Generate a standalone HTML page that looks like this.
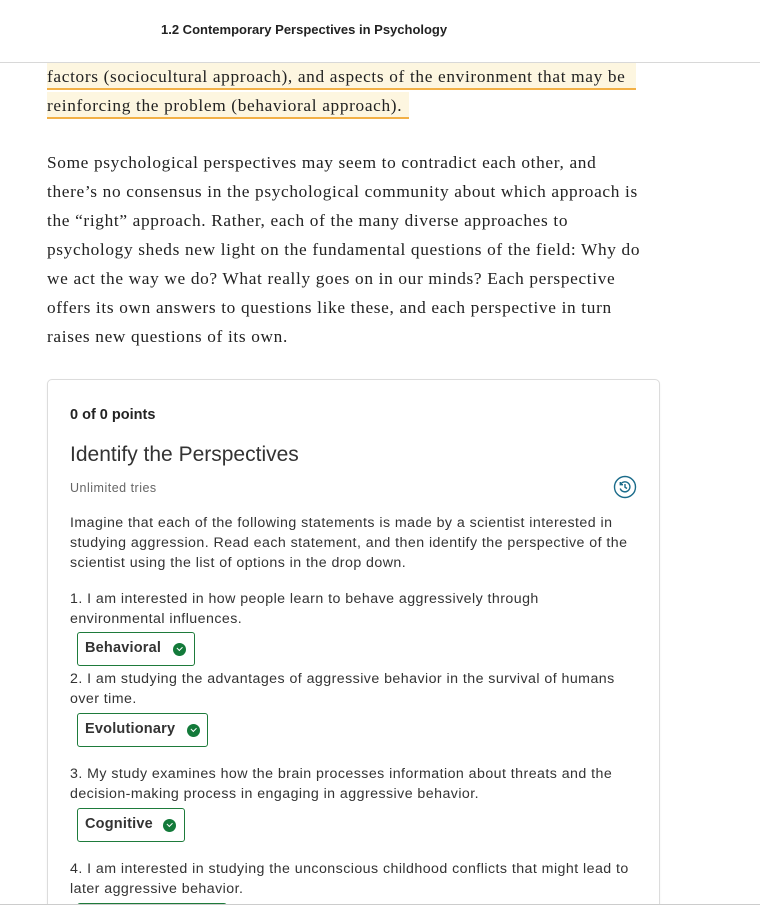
<!DOCTYPE html>
<html><head><meta charset="utf-8"><style>
*{margin:0;padding:0;box-sizing:border-box}
html,body{width:760px;height:908px;overflow:hidden}
body{background:#fff;position:relative;font-family:"Liberation Sans",sans-serif;color:#333}
.a{position:absolute;white-space:nowrap}
.hdr{left:161px;top:22px;font-size:13px;font-weight:bold;color:#222;letter-spacing:0}
.hl{position:absolute;height:27px;background:#fdf6e0;border-bottom:2px solid #f2b046}
.s{font-family:"Liberation Serif",serif;font-size:17.3px;color:#222;line-height:29px;letter-spacing:0.66px}
.t{font-size:14.2px;color:#333;line-height:20px;letter-spacing:0.45px}
.box{position:absolute;left:77px;height:34px;border:1.5px solid #1e7b3b;border-radius:3px;font-size:14.5px;font-weight:bold;color:#333;padding:7px 0 0 7px;letter-spacing:0.2px}
.chk{position:absolute;top:10px;width:13px;height:13px;border-radius:50%;background:#137a3a}
.chk:after{content:"";position:absolute;left:4px;top:3px;width:4px;height:2.5px;border-left:1.5px solid #fff;border-bottom:1.5px solid #fff;transform:rotate(-45deg)}
</style></head><body>
<div class="a hdr">1.2 Contemporary Perspectives in Psychology</div>
<div style="position:absolute;left:0;top:62px;width:760px;height:1px;background:#d8d8d8"></div>
<div class="hl" style="left:47px;top:63px;width:589px"></div>
<div class="hl" style="left:47px;top:92px;width:362px"></div>
<div class="a s" style="left:47px;top:62px">factors (sociocultural approach), and aspects of the environment that may be</div>
<div class="a s" style="left:47px;top:91px">reinforcing the problem (behavioral approach).</div>
<div class="a s" style="left:47px;top:148px">Some psychological perspectives may seem to contradict each other, and<br>there’s no consensus in the psychological community about which approach is<br>the “right” approach. Rather, each of the many diverse approaches to<br>psychology sheds new light on the fundamental questions of the field: Why do<br>we act the way we do? What really goes on in our minds? Each perspective<br>offers its own answers to questions like these, and each perspective in turn<br>raises new questions of its own.</div>
<div style="position:absolute;left:47px;top:379px;width:613px;height:540px;border:1px solid #dcdcdc;border-radius:5px;box-shadow:0 1px 2px rgba(0,0,0,.05)"></div>
<div class="a" style="left:70px;top:407px;font-size:14.5px;font-weight:bold;color:#222">0 of 0 points</div>
<div class="a" style="left:70px;top:443px;font-size:21px;color:#333">Identify the Perspectives</div>
<div class="a" style="left:70px;top:481px;font-size:12.5px;color:#666;letter-spacing:0.5px">Unlimited tries</div>
<svg class="a" style="left:613px;top:475px" width="24" height="24" viewBox="0 0 24 24"><circle cx="12" cy="12" r="10.5" fill="none" stroke="#1a6b8a" stroke-width="1.4"/><path d="M7.5 9.5A5 5 0 1 1 7.2 13.5M7.3 7v2.7h2.7M12 9v3.2l2 1.3" fill="none" stroke="#1a6b8a" stroke-width="1.4"/></svg>
<div class="a t" style="left:70px;top:513px">Imagine that each of the following statements is made by a scientist interested in<br>studying aggression. Read each statement, and then identify the perspective of the<br>scientist using the list of options in the drop down.</div>
<div class="a t" style="left:70px;top:589px">1. I am interested in how people learn to behave aggressively through<br>environmental influences.</div>
<div class="box" style="top:632px;width:118px">Behavioral<span class="chk" style="left:95px"></span></div>
<div class="a t" style="left:70px;top:669px">2. I am studying the advantages of aggressive behavior in the survival of humans<br>over time.</div>
<div class="box" style="top:713px;width:131px">Evolutionary<span class="chk" style="left:109px"></span></div>
<div class="a t" style="left:70px;top:764px">3. My study examines how the brain processes information about threats and the<br>decision-making process in engaging in aggressive behavior.</div>
<div class="box" style="top:808px;width:108px">Cognitive<span class="chk" style="left:85px"></span></div>
<div class="a t" style="left:70px;top:859px">4. I am interested in studying the unconscious childhood conflicts that might lead to<br>later aggressive behavior.</div>
<div style="position:absolute;left:77px;top:903px;width:150px;height:10px;border:1.5px solid #1e7b3b;border-radius:3px"></div>
<div style="position:absolute;left:0;top:904px;width:760px;height:4px;background:#fff;border-top:1px solid #ccc"></div>
</body></html>
